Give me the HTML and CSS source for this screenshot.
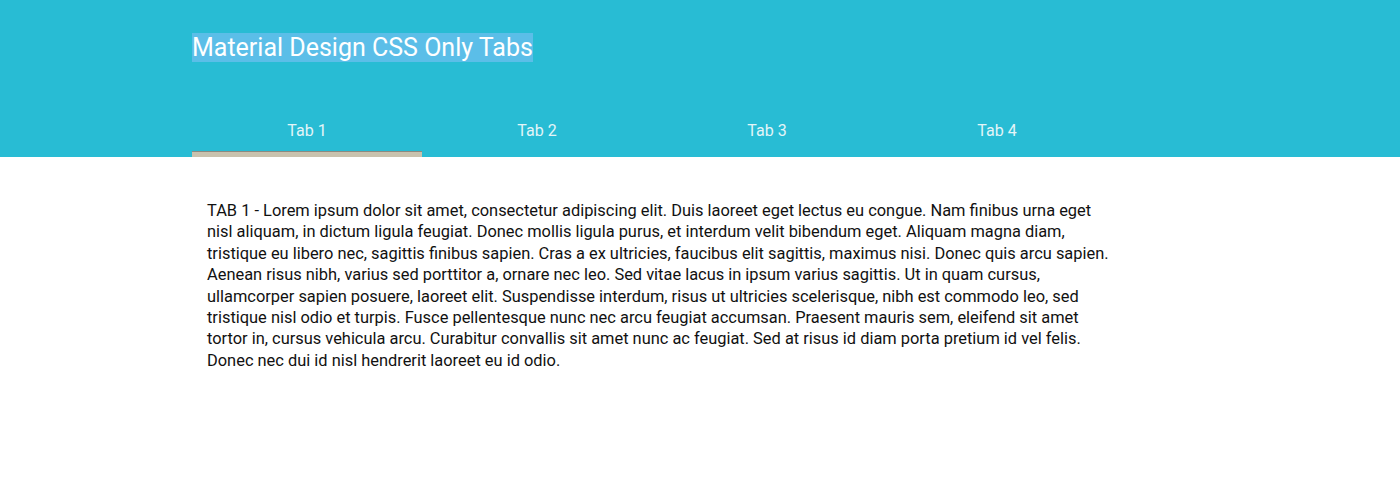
FILE: index.html
```html
<!DOCTYPE html>
<html>
<head>
<meta charset="utf-8">
<link rel="stylesheet" href="styles.css">
</head>
<body>
<header class="header">
  <div class="container">
    <h1 class="title"><span class="selected">Material Design CSS Only Tabs</span></h1>
    <nav class="tabs">
      <div class="tab active">Tab 1</div>
      <div class="tab">Tab 2</div>
      <div class="tab">Tab 3</div>
      <div class="tab">Tab 4</div>
    </nav>
  </div>
</header>
<main class="container">
  <p class="content">TAB 1 - Lorem ipsum dolor sit amet, consectetur adipiscing elit. Duis laoreet eget lectus eu congue. Nam finibus urna eget nisl aliquam, in dictum ligula feugiat. Donec mollis ligula purus, et interdum velit bibendum eget. Aliquam magna diam, tristique eu libero nec, sagittis finibus sapien. Cras a ex ultricies, faucibus elit sagittis, maximus nisi. Donec quis arcu sapien. Aenean risus nibh, varius sed porttitor a, ornare nec leo. Sed vitae lacus in ipsum varius sagittis. Ut in quam cursus, ullamcorper sapien posuere, laoreet elit. Suspendisse interdum, risus ut ultricies scelerisque, nibh est commodo leo, sed tristique nisl odio et turpis. Fusce pellentesque nunc nec arcu feugiat accumsan. Praesent mauris sem, eleifend sit amet tortor in, cursus vehicula arcu. Curabitur convallis sit amet nunc ac feugiat. Sed at risus id diam porta pretium id vel felis. Donec nec dui id nisl hendrerit laoreet eu id odio.</p>
</main>
</body>
</html>
```
FILE: styles.css
```css
* { box-sizing: border-box; }
html, body {
  margin: 0;
  padding: 0;
  background: #ffffff;
  font-family: Roboto, "Liberation Sans", sans-serif;
}
.header {
  background: #28bcd4;
  height: 157px;
}
.container {
  width: 1016px;
  margin: 0 0 0 192px;
}
.title {
  margin: 0;
  padding-top: 33px;
  height: 104px;
  font-size: 25px;
  font-weight: 400;
  line-height: 29px;
  color: #ffffff;
}
.selected {
  background: #5bbee8;
  display: inline-block;
  height: 29px;
}
.tabs {
  display: flex;
  width: 920px;
  height: 53px;
}
.tab {
  width: 230px;
  text-align: center;
  font-size: 16px;
  line-height: 20px;
  padding-top: 17px;
  color: #e3f5f8;
}
.tab.active {
  position: relative;
}
.tab.active::after {
  content: "";
  position: absolute;
  left: 0;
  right: 0;
  bottom: 0;
  height: 5px;
  background: #c9c2ae;
  border-top: 1px solid #8c8a80;
}
.content {
  margin: 0;
  padding: 43px 0 0 15px;
  width: 923px;
  font-size: 16.42px;
  line-height: 21.4px;
  color: #111111;
}
```
